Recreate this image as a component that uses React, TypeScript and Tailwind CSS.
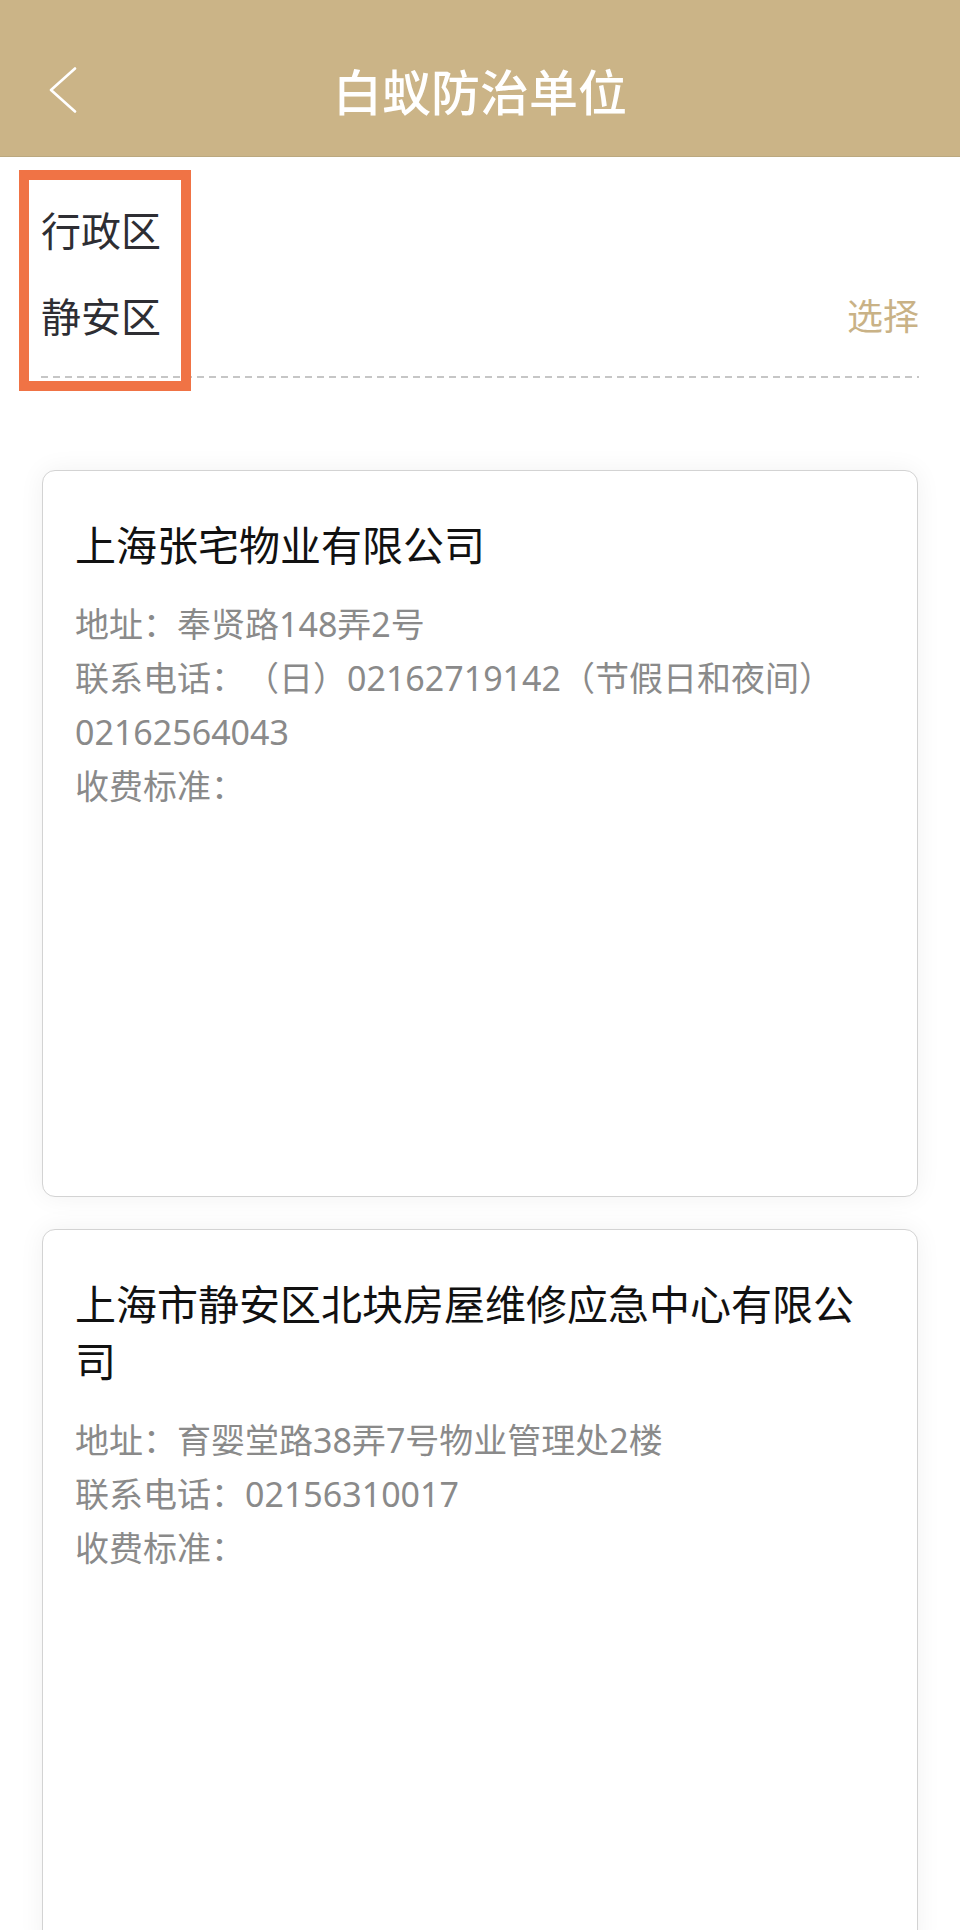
import React from "react";

type Unit = {
  name: string;
  address: string;
  phone: string;
  fee: string;
};

const units: Unit[] = [
  {
    name: "上海张宅物业有限公司",
    address: "奉贤路148弄2号",
    phone: "（日）02162719142（节假日和夜间）02162564043",
    fee: "",
  },
  {
    name: "上海市静安区北块房屋维修应急中心有限公司",
    address: "育婴堂路38弄7号物业管理处2楼",
    phone: "02156310017",
    fee: "",
  },
];

function UnitCard({ unit }: { unit: Unit }) {
  return (
    <div className="min-h-[727px] rounded-[13px] border border-[#d3d3d3] bg-white px-[32px] pt-[46px] shadow-[0_0_26px_rgba(0,0,0,0.06)]">
      <h2 className="text-[41px] leading-[57px] text-[#111]">{unit.name}</h2>
      <div className="mt-[23px] text-[34px] leading-[54px] text-[#8a8a8a] [text-spacing-trim:space-all]">
        <p>地址：{unit.address}</p>
        <p>联系电话：{unit.phone}</p>
        <p>收费标准：{unit.fee}</p>
      </div>
    </div>
  );
}

export default function App() {
  return (
    <div className="min-h-[1930px] bg-white font-['Noto_Sans','Noto_Sans_CJK_SC',sans-serif]">
      {/* 顶部导航 */}
      <header className="h-[157px] border-b border-[#bba87f] bg-[#cbb487] pt-[28px]">
        <div className="grid h-[128px] grid-cols-[120px_1fr_120px] items-center">
          <button className="flex h-full items-center pl-[49px]">
            <svg width="28" height="46" viewBox="0 0 28 46" fill="none" className="-mt-[4px]">
              <polyline
                points="26,1.5 2,23 26,44.5"
                stroke="#ffffff"
                strokeWidth="2.6"
                strokeLinecap="round"
                strokeLinejoin="round"
              />
            </svg>
          </button>
          <h1 className="text-center text-[49px] font-medium leading-none text-white">
            白蚁防治单位
          </h1>
          <div />
        </div>
      </header>

      {/* 行政区选择 */}
      <section className="relative px-[41px] pt-[46px]">
        <div className="h-[56px] text-[40px] leading-[56px] text-[#2e2e33]">行政区</div>
        <div className="mt-[30px] flex h-[56px] items-center justify-between">
          <span className="text-[40px] leading-[56px] text-[#2e2e33]">静安区</span>
          <button className="text-[36px] leading-[56px] text-[#c9b286]">选择</button>
        </div>
        <div className="mt-[31px] h-[2px] bg-[repeating-linear-gradient(to_right,#c6c6c6_0_7px,transparent_7px_12px)]" />
        <div className="pointer-events-none absolute left-[19px] top-[13px] h-[221px] w-[172px] border-[10px] border-[#f07345]" />
      </section>

      {/* 单位列表 */}
      <div className="mx-[42px] mt-[92px] flex flex-col gap-[32px]">
        {units.map((u) => (
          <UnitCard key={u.name} unit={u} />
        ))}
      </div>
    </div>
  );
}
